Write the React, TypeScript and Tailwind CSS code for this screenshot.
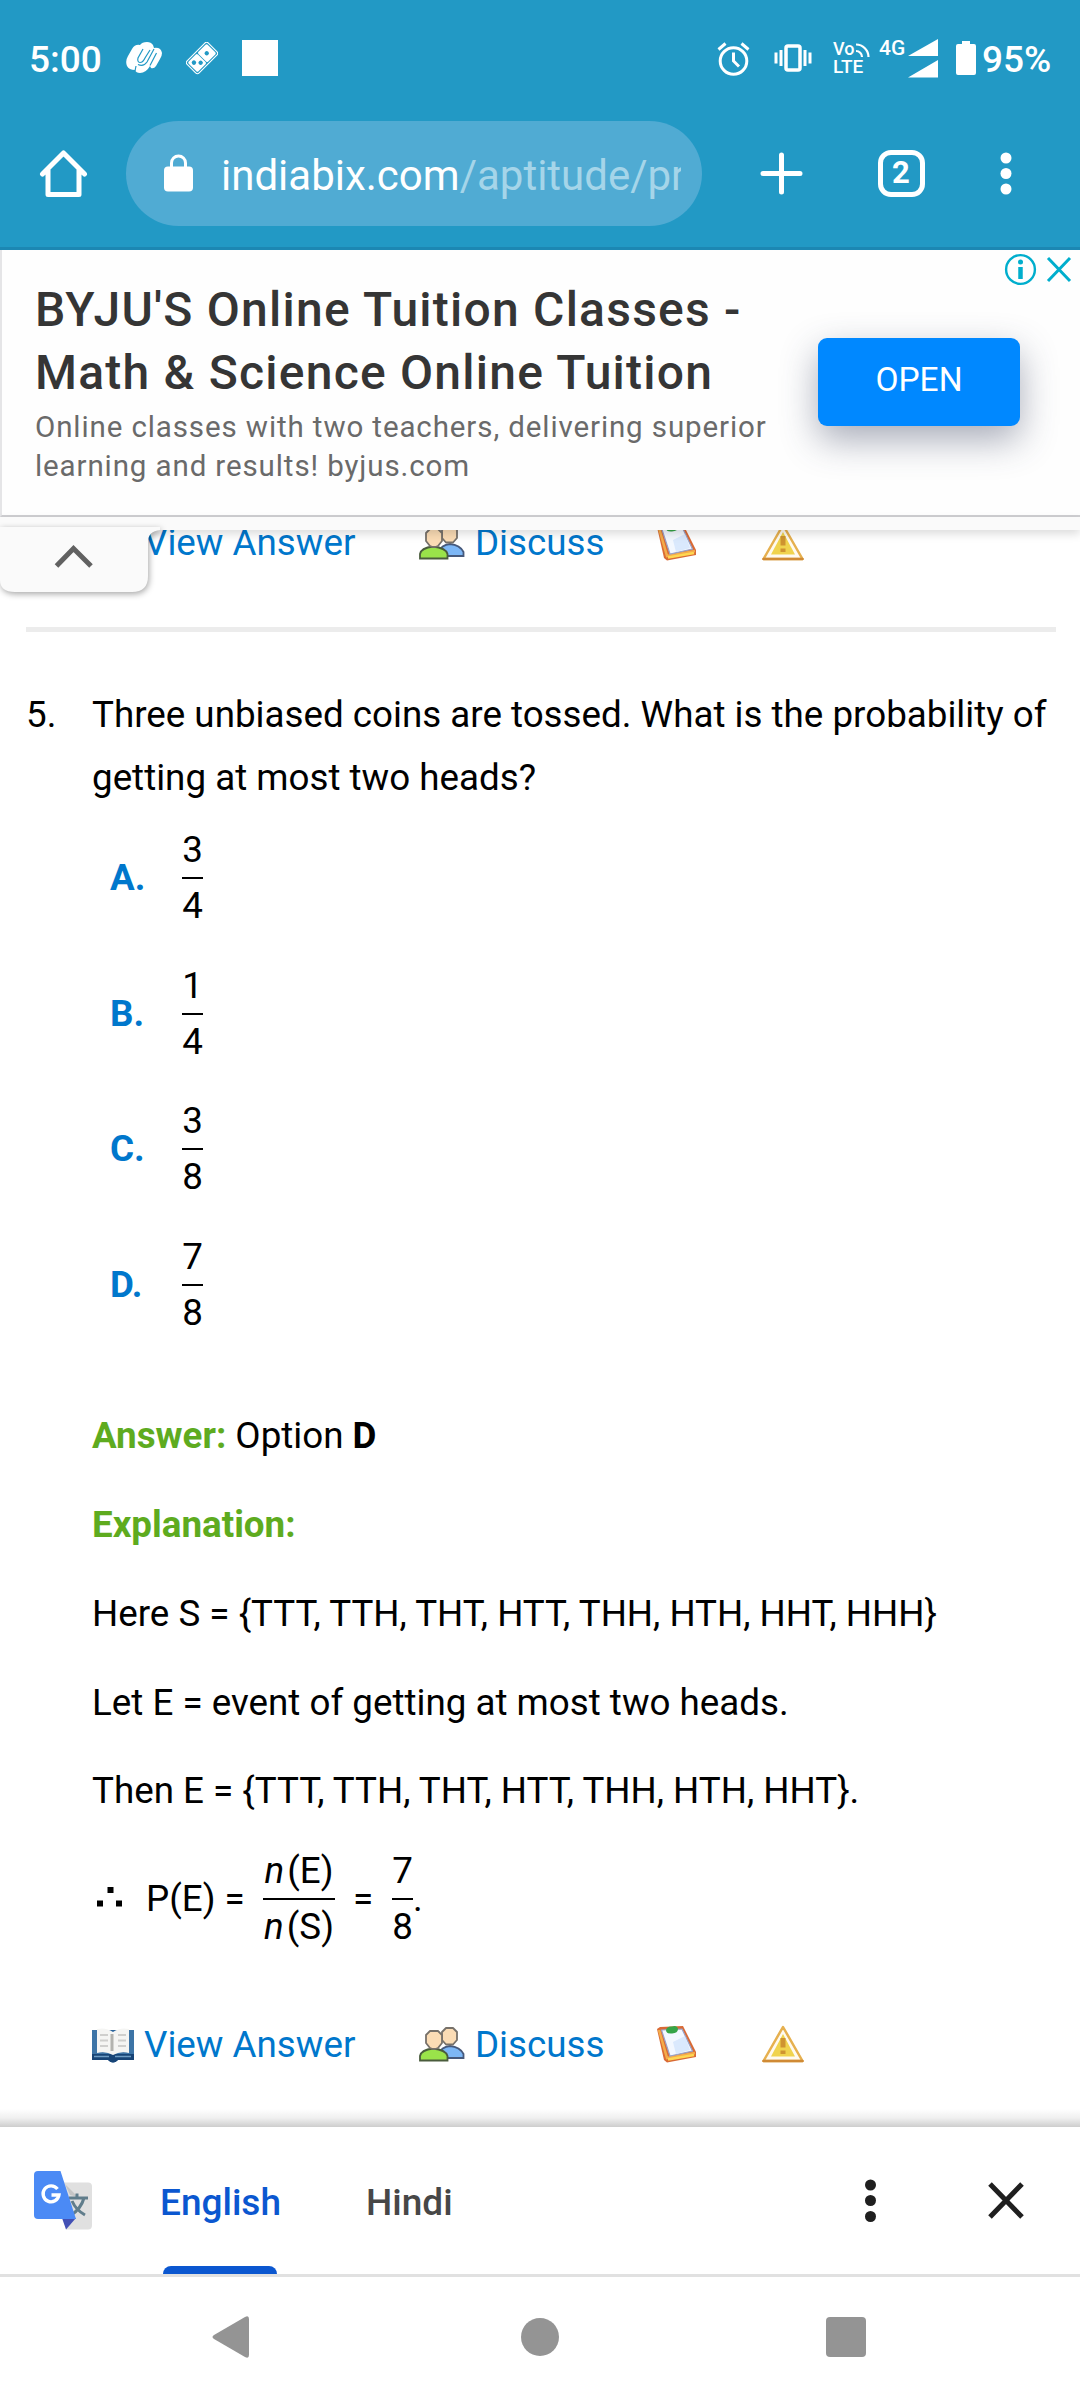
import type { ReactNode } from "react";

function StatusBar() {
  return (
    <div className="flex h-[116px] text-white">
      <span className="ml-[29px] mt-[38px] w-[97px] text-[37px] font-medium leading-[44px]">5:00</span>
      <svg className="mt-[42px]" width="36" height="32" viewBox="0 0 36 32" fill="none">
        <path d="M1 24Q-1 19 2 14L6 7Q9 2 14 3Q16 0 21 0Q25 0 27 3L28 6Q35 5 36 11Q36 14 34 17L30 24Q28 27 25 26L24 24Q20 31 14 31Q10 31 9 28Q3 28 1 24Z" fill="#fff" />
        <path d="M17 7L12 16Q11 20 14 20.500Q17 20.500 19 16L24 8M28 7L21 20Q17.500 25 12 22.500M10 24L9 29M30.500 11L24 23.500" stroke="#2299c5" strokeWidth="1.200" />
      </svg>
      <svg className="ml-6 mt-[42px]" width="32" height="34" viewBox="0 0 32 34">
        <g transform="translate(16 16) rotate(45)">
          <rect x="-8.500" y="-15" width="17" height="30" rx="2.500" fill="none" stroke="#fff" strokeWidth="1.100" />
          <rect x="-6.900" y="-13.400" width="13.800" height="13" rx="1.500" fill="#fff" />
          <rect x="-6.900" y="0.400" width="13.800" height="13" rx="1.500" fill="#fff" />
          <g fill="#2299c5">
            <circle cx="0" cy="-6.700" r="2.200" />
            <circle cx="-2.400" cy="9" r="2.200" />
            <circle cx="2.400" cy="4.300" r="2.200" />
          </g>
        </g>
      </svg>
      <div className="ml-6 mt-10 h-9 w-9 bg-white" />
      <svg className="ml-[439px] mt-[41px]" width="34" height="35" viewBox="0 0 34 35" fill="none" stroke="#fff" strokeWidth="3">
        <circle cx="16.500" cy="20" r="13.300" />
        <path d="M16.500 11.500V20L22 25.500M1.500 8.500L8.500 2.500M31.500 8.500L24.500 2.500" />
      </svg>
      <svg className="ml-[23px] mt-[43px]" width="38" height="30" viewBox="0 0 38 30" fill="none" stroke="#fff" strokeWidth="3">
        <rect x="12" y="3" width="14" height="24" rx="2" strokeWidth="3.500" />
        <path d="M2 9.500V20.500M7 7V23M31 7V23M36 9.500V20.500" />
      </svg>
      <div className="relative ml-[21px] mt-[41px] h-[36px] w-[40px] font-medium">
        <span className="absolute left-0 top-[1px] text-[18px] leading-[14px]">Vo</span>
        <span className="absolute left-0 top-[19px] text-[19px] leading-[14px]">LTE</span>
        <svg className="absolute left-[22px] top-[2px]" width="16" height="16" viewBox="0 0 16 16" fill="none" stroke="#fff" strokeWidth="2.200">
          <path d="M1 8A6 6 0 0 1 7 14M1 1.500A12.500 12.500 0 0 1 13.500 14" />
        </svg>
      </div>
      <span className="ml-[6px] mt-[37px] w-[29px] text-[21px] font-medium leading-[22px]">4G</span>
      <svg className="mt-[39px]" width="30" height="40" viewBox="0 0 30 40" fill="#fff">
        <path d="M30 0V17H0ZM30 21V38.500H0Z" />
      </svg>
      <svg className="ml-[18px] mt-[41px]" width="20" height="34" viewBox="0 0 20 34" fill="#fff">
        <path d="M6 0H14V3H18Q20 3 20 5V32Q20 34 18 34H2Q0 34 0 32V5Q0 3 2 3H6Z" />
      </svg>
      <span className="ml-[6px] mt-[38px] text-[37px] font-medium leading-[44px]">95%</span>
    </div>
  );
}

function Toolbar() {
  return (
    <div className="flex h-[134px] items-start border-b-[3px] border-[#1c87b3] pt-[5px] text-white">
      <svg className="ml-[39px] mt-[28px]" width="49" height="49" viewBox="0 0 49 49" fill="none" stroke="#fff" strokeWidth="5" strokeLinejoin="round">
        <path d="M3.500 25L24.500 4L45.500 25M9 20V45.500H40V20" strokeLinecap="round" />
      </svg>
      <div className="ml-[38px] flex h-[105px] w-[576px] rounded-full bg-[#50abd3]">
        <svg className="ml-[38px] mt-[33px]" width="29" height="38" viewBox="0 0 29 38">
          <rect y="12.500" width="29" height="25" rx="4" fill="#fff" />
          <path d="M7.500 14V9A7 7 0 0 1 21.500 9V14" fill="none" stroke="#fff" strokeWidth="3" />
        </svg>
        <div className="ml-[28px] mt-[25px] w-[460px] overflow-hidden whitespace-nowrap text-[42px] leading-[60px]">
          indiabix.com<span className="text-[#a5d5e9]">/aptitude/pr</span>
        </div>
      </div>
      <svg className="ml-[58px] mt-[31px]" width="43" height="43" viewBox="0 0 43 43" stroke="#fff" strokeWidth="5" strokeLinecap="round">
        <path d="M21.500 3V40M3 21.500H40" />
      </svg>
      <div className="ml-[75px] mt-[29px] flex h-[47px] w-[47px] items-center justify-center rounded-[13px] border-[5px] border-white pr-px text-[31px] font-bold">2</div>
      <svg className="ml-[75px] mt-[31px]" width="12" height="43" viewBox="0 0 12 43" fill="#fff">
        <circle cx="6" cy="6" r="5.500" />
        <circle cx="6" cy="21.500" r="5.500" />
        <circle cx="6" cy="37" r="5.500" />
      </svg>
    </div>
  );
}

function Ad() {
  return (
    <div className="flex h-[267px] border-b-2 border-l-2 border-b-[#cfcfd2] border-l-[#e5e5e7] bg-[#fefefe]">
      <div className="w-[780px] whitespace-nowrap pl-[33px] pt-[28px]">
        <div className="text-[48px] font-medium leading-[63px] tracking-[1.230px] text-[#353535]">
          BYJU'S Online Tuition Classes -<br />Math &amp; Science Online Tuition
        </div>
        <div className="mt-[4px] text-[29.500px] leading-[39px] tracking-[0.890px] text-[#6a6a6a]">
          Online classes with two teachers, delivering superior<br />learning and results! byjus.com
        </div>
      </div>
      <div className="ml-9 mt-[88px] flex h-[88px] w-[202px] items-center justify-center rounded-[9px] bg-[#0088ff] pb-[4px] text-[33.500px] text-white shadow-[0_14px_36px_rgba(50,60,90,0.42)]">OPEN</div>
      <svg className="-ml-[16px] mt-[3px]" width="70" height="34" viewBox="0 0 70 34" fill="none" stroke="#00aecd">
        <circle cx="16.500" cy="16.500" r="14.400" strokeWidth="2.400" />
        <path d="M16.500 14V26" strokeWidth="4.500" />
        <circle cx="16.500" cy="9" r="2.500" fill="#00aecd" stroke="none" />
        <path d="M44 5L66 28M66 5L44 28" strokeWidth="3" />
      </svg>
    </div>
  );
}

function BookIcon() {
  return (
    <svg width="42" height="38" viewBox="0 0 42 38">
      <path d="M0 4H42V34H26Q21 39 16 34H0Z" fill="#2d659c" />
      <path d="M0 4H5V27H18L21 30L24 27H37V4H42V34H0Z" fill="#3d74a6" />
      <path d="M0 28H42V34H26Q21 39 16 34H0Z" fill="#174476" />
      <path d="M5 3Q14 1 21 6Q28 1 37 3V27Q28 25 21 29Q14 25 5 27Z" fill="#f5f5f3" />
      <path d="M18.500 8H21.500V25H18.500Z" fill="#b3b3af" />
      <path d="M8 9H16M8 14.500H16M8 20H16M26 9H34M26 14.500H34M26 20H34" stroke="#cfcfcd" strokeWidth="2.200" />
      <path d="M2 30.500H17M23 30.500H39" stroke="#6d9cc4" strokeWidth="1.300" />
    </svg>
  );
}

function PeopleIcon() {
  return (
    <svg width="46" height="38" viewBox="0 0 46 38" strokeWidth="1.800">
      <path d="M20 32V28Q22 21 31 20Q41 21 44.500 28V32Z" fill="#7db7f6" stroke="#46597c" />
      <path d="M27 2H34L38 6V14L34 18.500H27L23 14V6Z" fill="#fbdcb5" stroke="#77716a" strokeLinejoin="round" />
      <path d="M1 34.500V30Q2 24 14 22.500Q27 24 28.500 30V34.500Z" fill="#9ae34a" stroke="#4a5c3c" />
      <path d="M11 5H19L23 9V17L19 22Q15 24 11 22L7 17V9Z" fill="#fbdcb5" stroke="#77716a" strokeLinejoin="round" />
    </svg>
  );
}

function ClipboardIcon() {
  return (
    <svg width="40" height="38" viewBox="0 0 40 38">
      <path d="M0 4L3 2L26 1L39 27V32L10 37.500L7 35Z" fill="#d96a35" />
      <path d="M2 5L10 33L38 28" fill="none" stroke="#f4ac4a" strokeWidth="2.500" />
      <path d="M11 34.500L37 30" stroke="#ffd751" strokeWidth="2.500" />
      <path d="M4.500 5L25 4L35.500 26L13 31Z" fill="#f3f8ff" stroke="#9aa3c8" strokeWidth="1.200" />
      <path d="M16 17L28 11L33 25L19 29Z" fill="#cfe2fc" opacity="0.700" />
      <path d="M9 5Q10 1 15 1.500Q20 0 21 4Q21 8 15 8.500Q9 9 9 5Z" fill="#36a547" />
    </svg>
  );
}

function WarningIcon() {
  return (
    <svg width="42" height="38" viewBox="0 0 42 38">
      <path d="M21 2L40.500 36H1.500Z" fill="#fffaf0" stroke="#e6b04f" strokeWidth="2.500" strokeLinejoin="round" />
      <path d="M1.500 36H40.500" stroke="#d08a35" strokeWidth="2.500" strokeLinecap="round" />
      <path d="M21 9L33 31.500H9Z" fill="#f0d34e" />
      <path d="M21 13V22.500" stroke="#cf9431" strokeWidth="5" />
      <rect x="18.500" y="25.500" width="5" height="3.500" fill="#cf9431" />
    </svg>
  );
}

function ActionRow() {
  return (
    <div className="flex h-[60px] items-start text-[36.750px] leading-[60px] text-[#0077cc]">
      <div className="ml-[92px] mt-[11px]"><BookIcon /></div>
      <span className="ml-[10px] w-[276px]">View Answer</span>
      <div className="-ml-px mt-[11px] w-[46px]"><PeopleIcon /></div>
      <span className="ml-[10px] w-[181px]">Discuss</span>
      <div className="ml-[1px] mt-[10px]"><ClipboardIcon /></div>
      <div className="ml-[65px] mt-[10px]"><WarningIcon /></div>
    </div>
  );
}

function Collapser() {
  return (
    <div className="relative z-10 h-[13px] bg-[#fafafa] shadow-[0_4px_10px_rgba(0,0,0,0.14)]">
      <svg className="absolute left-0 top-[10px] drop-shadow-[1px_2px_3px_rgba(0,0,0,0.35)]" width="162" height="72" viewBox="0 0 162 72">
        <path d="M0 0H160V3Q148 4 148 15V49Q148 65 132 65H15Q0 65 0 53Z" fill="#fafafa" />
        <path d="M56.500 39L73.500 21.500L91 39" fill="none" stroke="#616161" strokeWidth="5" />
      </svg>
    </div>
  );
}

function Fraction({ top, bottom, wide = false }: { top: ReactNode; bottom: ReactNode; wide?: boolean }) {
  return (
    <div className={wide ? "w-[72px] whitespace-nowrap text-center" : "w-[21px] text-center"}>
      <div className="h-[55px] border-b-2 border-black leading-[52px]">{top}</div>
      <div className="h-[55px] leading-[54px]">{bottom}</div>
    </div>
  );
}

const options = [
  ["A.", "3", "4"],
  ["B.", "1", "4"],
  ["C.", "3", "8"],
  ["D.", "7", "8"],
];

function Question() {
  return (
    <div className="text-[36.750px] text-black">
      <div className="ml-[26px] mr-[24px] mt-[43px] h-[5px] bg-[#ececec]" />
      <div className="mt-[51px] flex whitespace-nowrap leading-[63px]">
        <span className="ml-[26px] w-[66px]">5.</span>
        <p>Three unbiased coins are tossed. What is the probability of<br />getting at most two heads?</p>
      </div>
      <div className="mt-[15px]">
        {options.map(([label, top, bottom]) => (
          <div key={label} className="flex h-[135.500px]">
            <span className="ml-[110px] w-[72px] pt-[29px] font-bold leading-[50px] text-[#0077cc]">{label}</span>
            <Fraction top={top} bottom={bottom} />
          </div>
        ))}
      </div>
      <div className="ml-[92px] mt-[38px] whitespace-nowrap leading-[63px]">
        <p><b className="text-[#5eab1f]">Answer:</b> Option <b>D</b></p>
        <p className="mt-[26px] font-bold text-[#5eab1f]">Explanation:</p>
        <p className="mt-[26px]">Here S = {"{TTT, TTH, THT, HTT, THH, HTH, HHT, HHH}"}</p>
        <p className="mt-[26px]">Let E = event of getting at most two heads.</p>
        <p className="mt-[25px]">Then E = {"{TTT, TTH, THT, HTT, THH, HTH, HHT}."}</p>
      </div>
      <div className="ml-[97px] mt-[23px] flex h-[111px]">
        <svg className="mt-[42px]" width="25" height="20" viewBox="0 0 25 20">
          <path d="M0 13.500H6V19.500H0ZM10.500 0H16.500V6H10.500ZM19 13.500H25V19.500H19Z" />
        </svg>
        <span className="ml-[24px] w-[117px] leading-[108px]">P(E) =</span>
        <Fraction
          wide
          top={<><i className="mr-[3px]">n</i>(E)</>}
          bottom={<><i className="mr-[3px]">n</i>(S)</>}
        />
        <span className="ml-[18px] w-[39px] leading-[108px]">=</span>
        <Fraction top="7" bottom="8" />
        <span className="leading-[108px]">.</span>
      </div>
    </div>
  );
}

function TranslateIcon() {
  return (
    <svg width="58" height="59" viewBox="0 0 58 59">
      <path d="M29 11.500H54Q58 11.500 58 15.500V54Q58 58.500 54 58.500H32Z" fill="#e0e0e0" />
      <path d="M31 13L44 26L36 24Z" fill="#c5c5c5" />
      <g fill="none" stroke="#607d8b" strokeWidth="3">
        <path d="M35 27H54M43 22.500V27M50 27Q47 38 36 45M38 30Q42 39 51 44" />
      </g>
      <path d="M28 47H42L32 58.500Z" fill="#4350b5" />
      <path d="M4 0H26.500L42 48H4Q0 48 0 44V4Q0 0 4 0Z" fill="#4b8af5" />
      <path d="M23.500 18A8 8 0 1 0 25 24H17.500" fill="none" stroke="#fff" strokeWidth="3.300" />
    </svg>
  );
}

function TranslateBar() {
  return (
    <div className="relative flex h-[150px] border-b-[3px] border-[#e1e1e1] bg-white text-[37px] font-medium leading-[60px]">
      <div className="absolute inset-x-0 -top-[18px] h-[18px] bg-gradient-to-t from-[#cdcdcd] via-[#f0f0f0] to-white" />
      <div className="ml-[34px] mt-[44px]"><TranslateIcon /></div>
      <div className="ml-[68px] flex flex-col justify-between pt-[46px] text-[#0b57d0]">
        <span className="w-[120px]">English</span>
        <div className="ml-[3px] h-2 w-[114px] rounded-t-lg bg-[#0b57d0]" />
      </div>
      <span className="ml-[86px] w-[90px] pt-[46px] text-[#474747]">Hindi</span>
      <svg className="ml-[409px] mt-[52px]" width="12" height="44" viewBox="0 0 12 44" fill="#1f1f1f">
        <circle cx="5.500" cy="6" r="5.500" />
        <circle cx="5.500" cy="21.500" r="5.500" />
        <circle cx="5.500" cy="37.500" r="5.500" />
      </svg>
      <svg className="ml-[111px] mt-[55px]" width="36" height="38" viewBox="0 0 36 38" stroke="#1f1f1f" strokeWidth="5">
        <path d="M2 2L34 35M34 2L2 35" />
      </svg>
    </div>
  );
}

function NavBar() {
  return (
    <div className="flex h-[123px] bg-white">
      <svg className="ml-[212px] mt-[39px]" width="37" height="42" viewBox="0 0 37 42" fill="#949494">
        <path d="M2 19L33 1Q37-1 37 3V39Q37 43 33 41L2 23Q-1 21 2 19Z" />
      </svg>
      <div className="ml-[272px] mt-[41px] h-[38px] w-[38px] rounded-full bg-[#949494]" />
      <div className="ml-[267px] mt-[40px] h-10 w-10 rounded-[4px] bg-[#949494]" />
    </div>
  );
}

export default function App() {
  return (
    <div className="flex h-[2400px] w-[1080px] flex-col overflow-hidden bg-white font-[Roboto,sans-serif]">
      <div className="bg-[#2299c5]">
        <StatusBar />
        <Toolbar />
      </div>
      <Ad />
      <Collapser />
      <div className="-mt-[17px]"><ActionRow /></div>
      <div className="mt-[11px]"><Question /></div>
      <div className="mt-[59px]"><ActionRow /></div>
      <div className="mt-auto">
        <TranslateBar />
        <NavBar />
      </div>
    </div>
  );
}
